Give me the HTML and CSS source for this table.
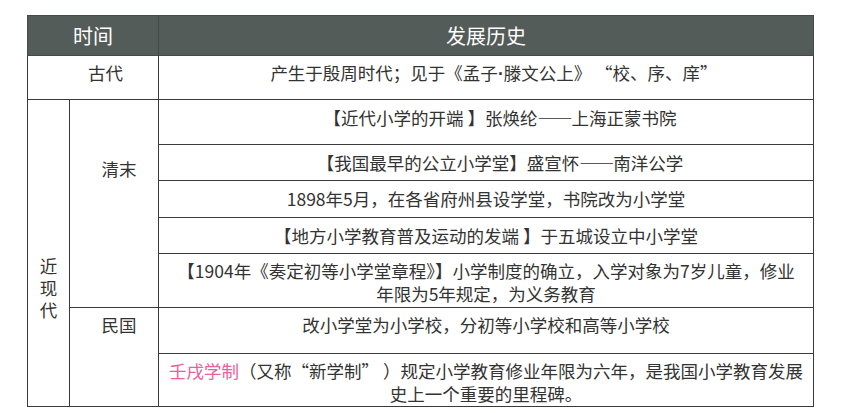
FILE: index.html
```html
<!DOCTYPE html>
<html lang="zh-CN">
<head>
<meta charset="utf-8">
<title>小学教育发展历史</title>
<link rel="stylesheet" href="styles.css">
</head>
<body>
<div class="page">
<table class="history">
  <colgroup>
    <col class="c-era">
    <col class="c-period">
    <col class="c-desc">
  </colgroup>
  <thead>
    <tr class="r-head">
      <th colspan="2">时间</th>
      <th>发展历史</th>
    </tr>
  </thead>
  <tbody>
    <tr class="r-ancient">
      <td colspan="2" class="ancient">古代</td>
      <td class="shift-s">产生于殷周时代；见于《孟子<span class="dot">·</span>滕文公上》 “校、序、庠”</td>
    </tr>
    <tr class="r1">
      <td rowspan="7" class="era">近<br>现<br>代</td>
      <td rowspan="5" class="period qing">清末</td>
      <td class="pt7 shift-l">【近代小学的开端 】张焕纶<span class="dash">——</span>上海正蒙书院</td>
    </tr>
    <tr class="r2">
      <td class="pt7 shift-l">【我国最早的公立小学堂】盛宣怀<span class="dash">——</span>南洋公学</td>
    </tr>
    <tr class="r3">
      <td class="pt6">1898年5月，在各省府州县设学堂，书院改为小学堂</td>
    </tr>
    <tr class="r4">
      <td class="pt6">【地方小学教育普及运动的发端 】于五城设立中小学堂</td>
    </tr>
    <tr class="r5">
      <td class="tight">【1904年《奏定初等小学堂章程》】小学制度的确立，入学对象为7岁儿童，修业<br>年限为5年规定，为义务教育</td>
    </tr>
    <tr class="r6">
      <td rowspan="2" class="period">民国</td>
      <td>改小学堂为小学校，分初等小学校和高等小学校</td>
    </tr>
    <tr class="r7">
      <td class="tight"><span class="hl">壬戌学制</span>（又称“新学制” ）规定小学教育修业年限为六年，是我国小学教育发展<br>史上一个重要的里程碑。</td>
    </tr>
  </tbody>
</table>
</div>
</body>
</html>
```
FILE: styles.css
```css
html, body {
  margin: 0;
  padding: 0;
  background: #ffffff;
}

.page {
  padding: 15px 0 0 27px;
}

.history {
  border-collapse: collapse;
  table-layout: fixed;
  width: 786px;
  font-family: "Microsoft YaHei", "Noto Sans CJK SC", "Noto Sans", sans-serif;
  font-size: 17.5px;
  line-height: 23px;
  color: #333333;
}

.c-era { width: 42px; }
.c-period { width: 89px; }
.c-desc { width: 655px; }

.history th,
.history td {
  border: 1px solid #3a3a3a;
  padding: 5px 14px 0;
  text-align: center;
  vertical-align: top;
  box-sizing: border-box;
  white-space: nowrap;
}

.history th {
  background: #545c59;
  color: #ffffff;
  font-weight: normal;
  font-size: 20px;
  line-height: 24px;
  padding: 8px 0 0;
  border-color: #444a48;
}

.r-head { height: 40px; }
.r-ancient { height: 44px; }
.r1 { height: 45px; }
.r2 { height: 36px; }
.r3 { height: 37px; }
.r4 { height: 36px; }
.r5 { height: 54px; }
.r6 { height: 46px; }
.r7 { height: 53px; }

.history td.pt7 { padding-top: 6px; }
.history td.pt6 { padding-top: 6px; }

.history td.tight {
  padding-left: 2px;
  padding-right: 2px;
}

.history td.shift-s {
  padding-left: 30px;
  padding-right: 14px;
}

.history td.shift-l {
  padding-left: 34px;
  padding-right: 6px;
}

.dot {
  font-family: "Liberation Sans", sans-serif;
  font-weight: bold;
}

.dash {
  font-weight: bold;
  letter-spacing: -1px;
}

.history td.ancient {
  padding-left: 25px;
  padding-right: 0;
}

.history td.era {
  padding: 155px 0 0;
  line-height: 22px;
}

.history td.period {
  padding-left: 10px;
  padding-right: 0;
}

.history td.qing {
  padding-top: 57px;
}

.hl {
  color: #e8609c;
}
```
